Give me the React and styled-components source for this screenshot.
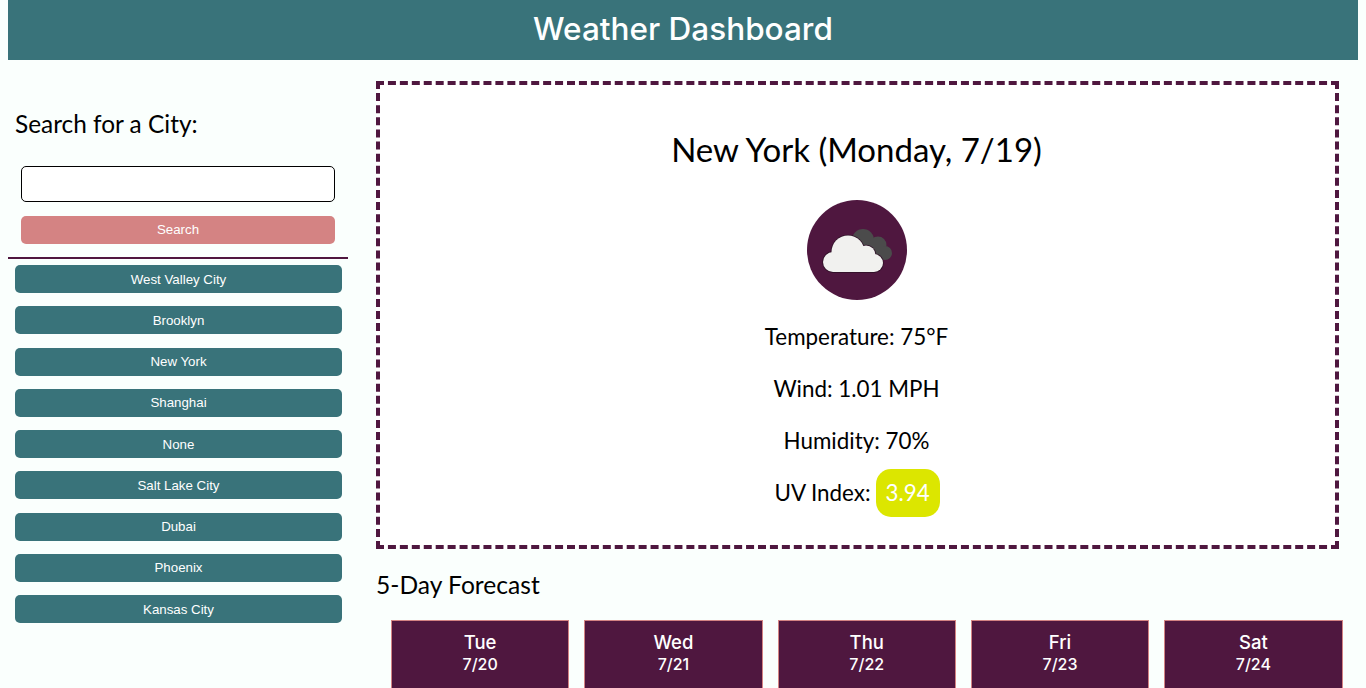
import styled, { createGlobalStyle } from 'styled-components'

const teal = '#39737a'
const plum = '#4f173f'
const rose = '#d48383'

const GlobalStyle = createGlobalStyle`
    html, body {
        height: 688px;
        overflow: hidden;
    }

    body {
        margin: 0 8px;
        background: #faFFFD;
        color: #000;
        font-family: "Lato", "Noto Sans", sans-serif;
    }

    * {
        box-sizing: border-box;
    }
`;

const Header = styled.header`
    height: 60px;
    background: ${teal};
    display: flex;
    align-items: center;
    justify-content: center;
`;

const PageTitle = styled.h1`
    margin: 0 0 4px;
    color: #fff;
    font-family: "Inter", sans-serif;
    font-size: 31.5px;
    font-weight: 500;
`;

const Layout = styled.div`
    display: grid;
    grid-template-columns: 340px 1fr;
`;

const Sidebar = styled.aside`
    display: flex;
    flex-direction: column;
    padding-top: 49px;
`;

const SearchLabel = styled.h2`
    margin: 0 0 27px 7px;
    font-size: 24.4px;
    line-height: 30px;
    font-weight: 400;
`;

const SearchInput = styled.input`
    display: block;
    width: 314px;
    height: 36px;
    margin-left: 13px;
    background: #fff;
    border: 1px solid #000;
    border-radius: 5px;
`;

const Button = styled.button`
    display: block;
    height: 28px;
    padding: 0;
    border: 0;
    border-radius: 5px;
    color: #fff;
    font-family: "Liberation Sans", Arial, sans-serif;
    font-size: 13.3px;
`;

const SearchButton = styled(Button)`
    width: 314px;
    margin: 14px 0 13px 13px;
    padding-bottom: 2px;
    background: ${rose};
`;

const Divider = styled.hr`
    width: 100%;
    height: 2px;
    margin: 0 0 6px;
    border: 0;
    background: ${plum};
`;

const CityList = styled.div`
    display: flex;
    flex-direction: column;
    gap: 13.25px;
    padding: 0 6px 0 7px;
`;

const CityButton = styled(Button)`
    width: 100%;
    background: ${teal};
`;

const Main = styled.main`
    padding: 21px 0 0 28px;
`;

const CurrentWeather = styled.section`
    width: 963px;
    height: 468px;
    padding: 41px 2px 0 0;
    background: #fff;
    border: 4px dashed ${plum};
    display: flex;
    flex-direction: column;
    align-items: center;
`;

const CityTitle = styled.h2`
    margin: 0 0 28px;
    font-size: 33px;
    line-height: 46px;
    font-weight: 400;
`;

const IconCircle = styled.div`
    width: 100px;
    height: 100px;
    margin-bottom: 22px;
    border-radius: 50%;
    background: ${plum};
`;

const Stat = styled.p`
    margin: 0 0 22px;
    font-size: 22.4px;
    line-height: 30px;
`;

const UvRow = styled.div`
    display: flex;
    align-items: center;
    gap: 5px;
    margin-top: -9px;
    margin-left: 1px;
    font-size: 22.4px;
`;

const UvLabel = styled.span`
    padding-bottom: 2px;
`;

const UvBadge = styled.span`
    width: 64px;
    height: 48px;
    padding-bottom: 2px;
    display: flex;
    align-items: center;
    justify-content: center;
    border-radius: 15px;
    background: #dce600;
    color: #fff;
`;

const ForecastTitle = styled.h3`
    margin: 21px 0 20px 0;
    font-size: 24.6px;
    line-height: 30px;
    font-weight: 400;
`;

const ForecastRow = styled.div`
    width: 951.5px;
    margin-left: 15px;
    display: grid;
    grid-template-columns: repeat(5, 1fr);
    gap: 15px;
`;

const DayCard = styled.article`
    height: 180px;
    padding-top: 9px;
    background: ${plum};
    border: 1px solid ${rose};
    color: #fff;
    text-align: center;
    font-family: "Inter", sans-serif;
    font-weight: 500;
`;

const DayName = styled.div`
    font-size: 18.5px;
    line-height: 24px;
`;

const DayDate = styled.div`
    font-size: 16px;
    line-height: 20px;
`;

const cities = ['West Valley City', 'Brooklyn', 'New York', 'Shanghai', 'None', 'Salt Lake City', 'Dubai', 'Phoenix', 'Kansas City']

const days = [
    { name: 'Tue', date: '7/20' },
    { name: 'Wed', date: '7/21' },
    { name: 'Thu', date: '7/22' },
    { name: 'Fri', date: '7/23' },
    { name: 'Sat', date: '7/24' },
]

const WhiteCloud = ({ fill, stroke }) => (
    <g fill={fill} stroke={stroke} strokeWidth={stroke ? 1.5 : 0}>
        <circle cx="41" cy="52" r="16.5" />
        <circle cx="26" cy="62" r="10" />
        <circle cx="59" cy="55" r="9.5" />
        <circle cx="67" cy="63" r="9" />
        <rect x="26" y="55" width="41" height="17" />
    </g>
)

const CloudIcon = () => (
    <svg width="100" height="100" viewBox="0 0 100 100">
        <g fill="#4b4b4b">
            <circle cx="56" cy="40" r="11" />
            <circle cx="71" cy="45" r="8.5" />
            <circle cx="78" cy="53" r="7" />
            <rect x="50" y="44" width="26" height="14" />
        </g>
        <WhiteCloud fill={plum} stroke="#2e1026" />
        <WhiteCloud fill="#f1f1ef" />
    </svg>
)

export const App = () => {
    return (
        <>
            <GlobalStyle />
            <Header>
                <PageTitle>Weather Dashboard</PageTitle>
            </Header>
            <Layout>
                <Sidebar>
                    <SearchLabel>Search for a City:</SearchLabel>
                    <SearchInput type="text" />
                    <SearchButton>Search</SearchButton>
                    <Divider />
                    <CityList>
                        {cities.map((city) => (
                            <CityButton key={city}>{city}</CityButton>
                        ))}
                    </CityList>
                </Sidebar>
                <Main>
                    <CurrentWeather>
                        <CityTitle>New York (Monday, 7/19)</CityTitle>
                        <IconCircle>
                            <CloudIcon />
                        </IconCircle>
                        <Stat>Temperature: 75°F</Stat>
                        <Stat>Wind: 1.01 MPH</Stat>
                        <Stat>Humidity: 70%</Stat>
                        <UvRow>
                            <UvLabel>UV Index:</UvLabel>
                            <UvBadge>3.94</UvBadge>
                        </UvRow>
                    </CurrentWeather>
                    <ForecastTitle>5-Day Forecast</ForecastTitle>
                    <ForecastRow>
                        {days.map((day) => (
                            <DayCard key={day.name}>
                                <DayName>{day.name}</DayName>
                                <DayDate>{day.date}</DayDate>
                            </DayCard>
                        ))}
                    </ForecastRow>
                </Main>
            </Layout>
        </>
    )
}

export default App
